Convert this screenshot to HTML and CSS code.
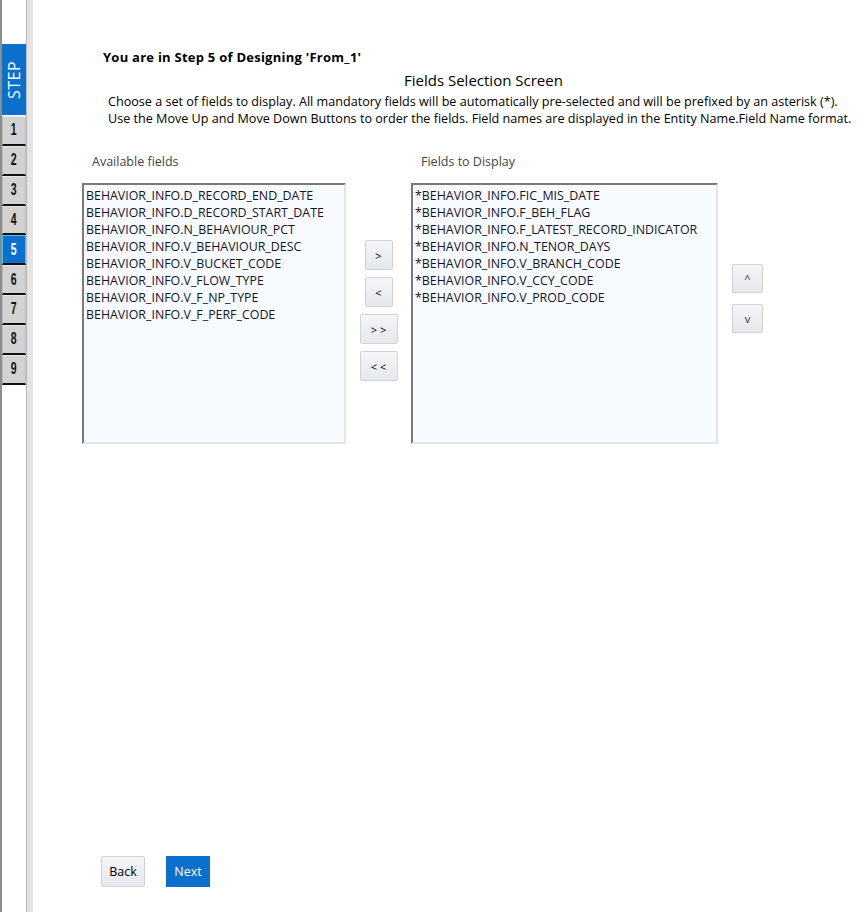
FILE: index.html
```html
<!DOCTYPE html>
<html>
<head>
<meta charset="utf-8">
<link rel="stylesheet" href="styles.css">
</head>
<body>
<div class="page">
  <nav class="rail">
    <div class="step-head"><span>STEP</span></div>
    <div class="step"><span>1</span></div>
    <div class="step"><span>2</span></div>
    <div class="step"><span>3</span></div>
    <div class="step"><span>4</span></div>
    <div class="step active"><span>5</span></div>
    <div class="step"><span>6</span></div>
    <div class="step"><span>7</span></div>
    <div class="step"><span>8</span></div>
    <div class="step"><span>9</span></div>
  </nav>
  <div class="gutter"></div>
  <main class="main">
    <div class="title">You are in Step 5 of Designing 'From_1'</div>
    <div class="screen-name">Fields Selection Screen</div>
    <div class="intro">
      <div>Choose a set of fields to display. All mandatory fields will be automatically pre-selected and will be prefixed by an asterisk (*).</div>
      <div>Use the Move Up and Move Down Buttons to order the fields. Field names are displayed in the Entity Name.Field Name format.</div>
    </div>
    <div class="picker">
      <div class="pane">
        <div class="pane-label">Available fields</div>
        <div class="listbox left-box">
          <div>BEHAVIOR_INFO.D_RECORD_END_DATE</div>
          <div>BEHAVIOR_INFO.D_RECORD_START_DATE</div>
          <div>BEHAVIOR_INFO.N_BEHAVIOUR_PCT</div>
          <div>BEHAVIOR_INFO.V_BEHAVIOUR_DESC</div>
          <div>BEHAVIOR_INFO.V_BUCKET_CODE</div>
          <div>BEHAVIOR_INFO.V_FLOW_TYPE</div>
          <div>BEHAVIOR_INFO.V_F_NP_TYPE</div>
          <div>BEHAVIOR_INFO.V_F_PERF_CODE</div>
        </div>
      </div>
      <div class="moves">
        <button class="btn small">&gt;</button>
        <button class="btn small">&lt;</button>
        <button class="btn wide">&gt; &gt;</button>
        <button class="btn wide">&lt; &lt;</button>
      </div>
      <div class="pane">
        <div class="pane-label">Fields to Display</div>
        <div class="listbox right-box">
          <div>*BEHAVIOR_INFO.FIC_MIS_DATE</div>
          <div>*BEHAVIOR_INFO.F_BEH_FLAG</div>
          <div>*BEHAVIOR_INFO.F_LATEST_RECORD_INDICATOR</div>
          <div>*BEHAVIOR_INFO.N_TENOR_DAYS</div>
          <div>*BEHAVIOR_INFO.V_BRANCH_CODE</div>
          <div>*BEHAVIOR_INFO.V_CCY_CODE</div>
          <div>*BEHAVIOR_INFO.V_PROD_CODE</div>
        </div>
      </div>
      <div class="order">
        <button class="btn ud">^</button>
        <button class="btn ud">v</button>
      </div>
    </div>
    <div class="nav-buttons">
      <button class="btn back">Back</button>
      <button class="btn next">Next</button>
    </div>
  </main>
</div>
</body>
</html>
```

FILE: styles.css
```css
html, body {
  margin: 0;
  padding: 0;
  background: #ffffff;
}
body {
  font-family: "Open Sans", "Noto Sans", sans-serif;
  font-size: 12.5px;
  color: #000;
}
.page {
  display: flex;
  min-height: 912px;
}
.rail {
  width: 24px;
  border-left: 2px solid #8c8c8c;
  border-right: 1px solid #b8b8b8;
  background: #fff;
  padding-top: 44px;
  display: flex;
  flex-direction: column;
}
.gutter {
  width: 6px;
  background: #e4e4e4;
}
.step-head {
  height: 71px;
  background: #0b70cd;
  display: flex;
  align-items: center;
  justify-content: center;
  margin-bottom: 1px;
}
.step-head span {
  transform: rotate(-90deg);
  color: #fff;
  font-family: "Open Sans", sans-serif;
  font-size: 16px;
  letter-spacing: 0.5px;
  white-space: nowrap;
}
.step {
  height: 26.85px;
  background: #d2d2d2;
  border: 1px solid #bdbdbd;
  border-top-color: #e6e6e6;
  border-bottom: 2px solid #111;
  display: flex;
  align-items: center;
  justify-content: center;
}
.step span {
  font-family: "Liberation Sans", sans-serif;
  font-weight: bold;
  font-size: 17px;
  transform: scaleX(0.62);
  color: #111;
}
.step.active {
  background: #0b70cd;
  border: 1px solid #48c6f0;
  border-bottom: 2px solid #111;
}
.step.active span {
  color: #fff;
}
.main {
  flex: 1;
  padding-top: 49px;
}
.title {
  margin-left: 70px;
  font-weight: bold;
  font-size: 13px;
  letter-spacing: 0.25px;
  line-height: 16px;
}
.screen-name {
  margin-left: 371px;
  margin-top: 5px;
  font-size: 15px;
  line-height: 20px;
}
.intro {
  margin-left: 75px;
  margin-top: 3px;
  font-size: 12.6px;
  line-height: 17px;
  white-space: nowrap;
}
.picker {
  display: flex;
  align-items: flex-start;
  margin-left: 49px;
  margin-top: 26px;
}
.pane {
  display: flex;
  flex-direction: column;
}
.pane-label {
  margin-left: 10px;
  color: #444;
  line-height: 17px;
  margin-bottom: 13px;
}
.listbox {
  height: 253px;
  background: #f7fafe;
  border-top: 2px solid #7a7a7a;
  border-left: 2px solid #7a7a7a;
  border-right: 2px solid #e4e4e4;
  border-bottom: 2px solid #e4e4e4;
  padding: 2px 2px;
  box-sizing: content-box;
  font-size: 12.4px;
  line-height: 17px;
  color: #141428;
  white-space: nowrap;
  overflow: hidden;
}
.left-box { width: 256px; }
.right-box { width: 299px; }
.moves {
  width: 65px;
  margin-top: 87px;
  display: flex;
  flex-direction: column;
  align-items: center;
  gap: 7px;
}
.btn {
  font-family: "Open Sans", sans-serif;
  font-size: 11px;
  color: #000;
  background: linear-gradient(#f4f5f7, #e5e8ec);
  border: 1px solid #cfd2d6;
  border-radius: 2px;
  padding: 0;
  margin: 0;
}
.small { width: 28px; height: 30px; }
.wide { width: 38px; height: 30px; }
.order {
  margin-left: 14px;
  margin-top: 111px;
  display: flex;
  flex-direction: column;
  gap: 11px;
}
.ud { width: 31px; height: 29px; font-size: 11px; color: #1a2a6a; }
.nav-buttons {
  display: flex;
  gap: 21px;
  margin-left: 68px;
  margin-top: 412px;
}
.back {
  width: 44px;
  height: 31px;
  font-size: 12.5px;
}
.next {
  width: 44px;
  height: 31px;
  font-size: 12.5px;
  background: #0b70cd;
  border-color: #0b70cd;
  color: #fff;
  border-radius: 0;
}
```
